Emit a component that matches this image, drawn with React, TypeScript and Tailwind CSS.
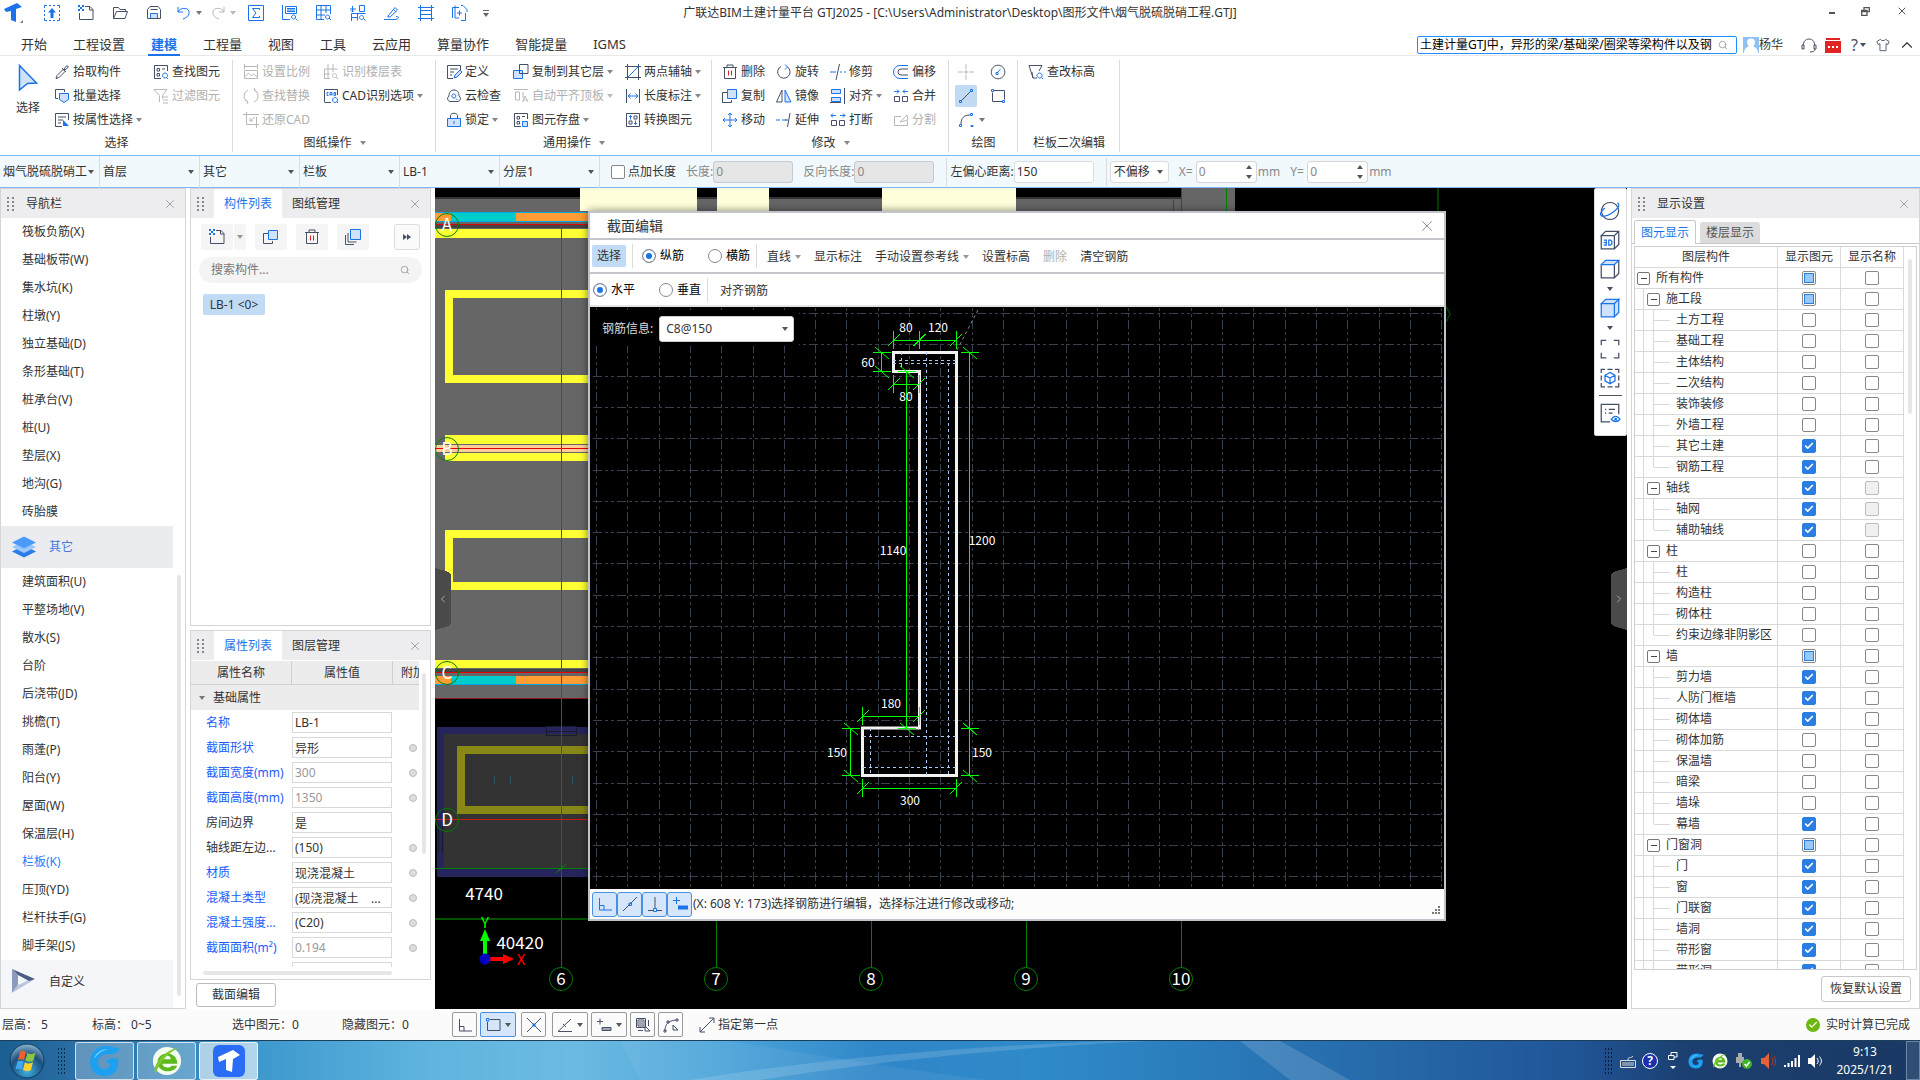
import { useId, type ReactNode } from 'react';
import { Check, ChevronLeft, ChevronRight, ChevronUp, Search, X } from 'lucide-react';
import clsx from 'clsx';

// d = dark stroke, b = blue stroke, f = blue stroke + light fill, r = red stroke, s = solid blue
type Stroke = ['d' | 'b' | 'f' | 'r' | 's', string];

const ICONS: Record<string, Stroke[]> = {
  newFile: [['d', 'M7 1.5h5l3 3V14.5H1.5V8M11.5 1.5V5H15'], ['s', 'M0 0h2v2H0zM4 0h2v2H4zM2 2h2v2H2zM0 4h2v2H0zM4 4h2v2H4z']],
  upload: [['s', 'M8 3l4 4.5H9.5V13h-3V7.5H4z'], ['b', 'M.5 3V.5H3M5 .5h2M9 .5h2M13 .5h2.5V3M15.5 5v2M15.5 9v2M15.5 13v2.5H13M11 15.5H9M7 15.5H5M3 15.5H.5V13M.5 11V9M.5 7V5']],
  open: [['d', 'M1.5 13.5V2.5h5l1.5 2h5.5v2M1.5 13.5l3-7h11l-2.5 7z']],
  save: [['f', 'M4.5 8.5h7v5h-7z'], ['d', 'M1.5 13.5v-9l2.5-3h8l2.5 3v9zM4.5 4.5h7']],
  undo: [['b', 'M2 2v5h5M2 7c2-5 12-5 11 1 0 3-3 5-6 6']],
  redo: [['b', 'M14 2v5H9M14 7C12 2 2 2 3 8c0 3 3 5 6 6']],
  sigma: [['b', 'M.5.5h15v15H.5zM11.5 5V3.5h-7L8 8l-3.5 4.5h7V11']],
  sheetFind: [['b', 'M.5 0v14.5H8M3.5 1.5h11v7h-11zM5 3.5h8M5 5h8M5 6.500h8M15.5 15.500l-2-2M11.5 10a2 2 0 1 0 .1 0z']],
  gridFind: [['b', 'M.5.5h14V9M.5.5v14H8M.5 5h14M.5 10H9M5 .5v14M10 .5V8M15 15l-2-2M11.5 10a2 2 0 1 0 .1 0z']],
  swapFind: [['b', 'M0 4h6M2.5 1v6M1 5.500l1.500 1.500L4 5.500M9.5.5h5v6h-5zM1.5 16V8.500M1.500 8.500h14M1.500 12.500H8M7.500 8.500v7M15.500 15.500l-2-2M11.5 10.500a2 2 0 1 0 .1 0z']],
  brush: [['b', 'M0 14.5h10c5 0 6-3 2-3M4 11l7-8.500 2.5 2.5-7.500 7H4zM9.500 4.500l2.500 2.500']],
  fence: [['b', 'M2.5 0v16M13.5 0v16M0 2.500h16M2.5 5.500h11M2.5 9.500h11M0 13.500h16']],
  addDoc: [['b', 'M7 2.500H.5V13M3 .5v12.500h4M9 .5h2l4 4V7M13.500 8v7.500H9M5 8h5M7.500 5.500v5']],
  pick: [['d', 'M2 14.5l1-3 6-6 2 2-6 6zM8 4l4 4M10 5l3-3.5 1.5 1.5L11 6z']],
  batch: [['d', 'M4 10.5H1.5v-9h9V4'], ['f', 'M5.5 5.5h9v6l-4.5 3-4.5-3z']],
  attr: [['d', 'M8 14.5H1.5v-13h13V8M4 5h8M4 8h5M4 11h3'], ['s', 'M9 8l6 6H9z']],
  find: [['d', 'M8 14.5H1.5v-13h13V7M4 4.5h2.5V7H4zM4 9.5h2.5V12H4zM9 5h3'], ['b', 'M15 15l-1.5-1.5M12 9a2.5 2.5 0 1 0 .1 0z']],
  filter: [['d', 'M1 1.5h13L9.5 7.5v3M6.5 14V7.5L1 1.5M10 9h5M10 12h5M10 15h5']],
  scale: [['d', 'M1.5 2.5h13M1.5 0v5M14.5 0v5M1.5 6.5h13v8h-13zM1.5 13l4-4 3 3 2-2 4 3']],
  floorTable: [['d', 'M1.5 5v9.5H7M1.5 5h13M5 0v14M1.5 10H7M10 0v8M15 15l-2-2M11.5 9.5a2 2 0 1 0 .1 0z']],
  replace: [['d', 'M5 2a6.5 6.5 0 0 0 0 12M2 12l3 2-1 2M11 14a6.5 6.5 0 0 0 0-12M14 4l-3-2 1-2']],
  cad: [['d', 'M1.5 14V1.5h13V7M8 14.5H1.5'], ['b', 'M5.5 4.5H4v3h1.5M7 7.5v-3h2v3M7 6.5h2M11 4.5v3h1.5v-3zM15 15l-1.5-1.5M12 9.5a2.5 2.5 0 1 0 .1 0z']],
  restore: [['d', 'M3.5 0v12.5M0 2.5h16M3.5 12.5H16M13.5 5v11M12 5L7 9M7 6v3h3']],
  define: [['d', 'M7 14.5H1.5v-13h13V6M4 5h8M4 8h4M4 11h2'], ['f', 'M8 14l1-3 5-5 2 2-5 5z']],
  cloud: [['d', 'M4 13.5a3 3 0 0 1-1-5.5C3 4 5 2 8 2s5 2 5 6a3 3 0 0 1-1 5.5z'], ['b', 'M7.8 6a2 2 0 1 0 .1 0zM10 10.5l1.5 1.5']],
  lock: [['f', 'M1.5 6.5h13v8h-13z'], ['d', 'M4.5 6V3.5C5 .5 11 .5 11.5 3.5V6'], ['b', 'M8 9v3']],
  copyTo: [['f', 'M.5 6.5h9v8h-9z'], ['d', 'M6.5.5h8.5v9H6.5z']],
  alignTop: [['d', 'M1 1.5h14M2.5 4v8M2.5 4h4v8h-4zM10 4v6M9.5 14l2.5-6 3 6M10 12h4']],
  store: [['d', 'M8 14.5H1.5v-13h13V7M4 4.5h2.5V7H4zM4 9.5h2.5V12H4zM9 4.5h3'], ['f', 'M9.5 9.5h5v5h-5z']],
  twoPoint: [['d', 'M2.5 0v16M13.5 0v16M0 2.5h16M0 13.5h16'], ['b', 'M2 14L14 2']],
  lengthDim: [['d', 'M1.5 1v14M14.5 1v14'], ['b', 'M3 8h10M5.5 5.5L3 8l2.5 2.5M10.5 5.5L13 8l-2.5 2.5']],
  convert: [['d', 'M1.5 1.5h13v13h-13zM9 4h3v3H9zM4 9h3v3H4z'], ['b', 'M5.5 3.5v4M4 5l1.5-1.5L7 5M10.5 12.5v-4M9 11l1.5 1.5L12 11']],
  trash: [['d', 'M1 3.5h14M5 3V1h6v2M2.5 3.5v11h11v-11'], ['r', 'M6.5 6.5v5M9.5 6.5v5']],
  rotate: [['d', 'M5 2.5a6.2 6.2 0 1 0 6.5.5'], ['b', 'M9 .5L11.5 3 9 5.5']],
  trim: [['d', 'M9.5 0L6 16'], ['b', 'M0 8h6M10 8h2M14 8h2']],
  offset: [['b', 'M15 1.5H7a6 6 0 0 0 0 13h8'], ['d', 'M15 5H8a3 3 0 0 0 0 6h7']],
  copy: [['d', 'M5 4.5H.5v10h9V12'], ['f', 'M5.5 1.5h9v9h-9z']],
  mirror: [['d', 'M6 2v12H.5z'], ['f', 'M9 2v12h6z']],
  align: [['f', 'M1.5 1.5h9v4h-9zM1.5 9.5h9v4h-9z'], ['d', 'M14.5 0v16M0 14.5h11']],
  merge: [['d', 'M1.5 8.5h5v5h-5zM9.5 8.5h5v5h-5z'], ['b', 'M1 3.5h5M4 1.5l2 2-2 2M15 3.5h-5M12 1.5l-2 2 2 2']],
  move: [['b', 'M8 1v14M1 8h14M6 3l2-2 2 2M6 13l2 2 2-2M3 6L1 8l2 2M13 6l2 2-2 2']],
  extend: [['b', 'M0 8h4M6 8h4'], ['d', 'M14 1l-2.5 14M9 8h3']],
  breakUp: [['d', 'M1.5 8.5h5v5h-5zM9.5 8.5h5v5h-5z'], ['b', 'M6 3.5H1M3 1.5l-2 2 2 2M10 3.5h5M13 1.5l2 2-2 2']],
  split: [['d', 'M8 4.5H1.5v9h13V9M7 10l7-7 1 5z']],
  point: [['d', 'M8 0v5M8 11v5M0 8h5M11 8h5M7 7h2v2H7z']],
  circle: [['d', 'M8 1.2a6.8 6.8 0 1 0 .1 0z'], ['b', 'M7 9l3.5-4M6 8.5h2v2H6z']],
  line: [['d', 'M3 13L13 3'], ['b', 'M1.5 12.5h2v2h-2zM12.5 1.5h2v2h-2z']],
  rect: [['d', 'M3.5 2.5h11v9M12.5 13.5h-10v-9'], ['b', 'M1.5 1.5h2v2h-2zM12.5 12.5h2v2h-2z']],
  arc: [['d', 'M3 12c0-6 3-9 9-9'], ['b', 'M1.5 12.5h2v2h-2zM12.5 1.5h2v2h-2zM13 13.5h2v1h-2z']],
  level: [['d', 'M1 1.5h13L11 7M1 1.5L5 14h4M4 8l1 6'], ['b', 'M15 15l-1.5-1.5M11.5 9a2.5 2.5 0 1 0 .1 0z']],
  stack: [['d', 'M.5 6v9.5H9M3 4v9h8.5'], ['f', 'M5.5.5h10v10h-10z']],
  ortho: [['d', 'M2.5 2v12H15M3 9.5h4V14']],
  orthoB: [['b', 'M2.5 2v12H15M3 9.5h4V14']],
  midB: [['d', 'M1 15L15 1'], ['b', 'M7 7h2.5v2.5H7z']],
  perpB: [['d', 'M8 1v11M1 14.5h5M10 14.5h5'], ['b', 'M6.5 12.5h3v3h-3z']],
  inputB: [['b', 'M1 4.5h7M4.5 1v7'], ['s', 'M6 9.5h10v4H6z']],
  snapRect: [['d', 'M5 2.5h10v11H2.5V5'], ['b', 'M1.5 1.5h2.5v2.5H1.5z']],
  cross: [['d', 'M1 1l14 14M15 1L1 15'], ['s', 'M6.5 6.5h3v3h-3z']],
  angle: [['d', 'M1 14.5h14M1 14.5L14 2M6 7l3 3']],
  inputD: [['d', 'M1 4.5h6M4 1.5v6M6 10.5h9v3H6zM6 12h9']],
  layers: [['d', 'M1.5 1.5h9v9h-9zM3 3h6v6H3zM4 5h4M4 7h4M13.5 3v6M3 13.5h5M10 9l5 5h-5z']],
  arcPick: [['d', 'M2 14C2 7 5 4 13 3M1 13h2v2H1zM13 2h2v2h-2zM4 4h2v2H4zM10 8l5 5h-5z']],
  arrows: [['d', 'M1 15L15 1M10 1h5v5M1 10v5h5']],
  orbit: [['d', 'M8 1.2a6.8 6.8 0 1 0 .1 0z'], ['b', 'M14 1.5c3 2-1 6-5 8.5s-8 3-8.5 1S2 7 4 5.5']],
  threeD: [['d', 'M1 5v10h10.5V4.5H1L4.5 1H15v10.5l-3.5 3.5M11.5 4.5L15 1'], ['b', 'M3 8h2v4H3M3 10h2M7 8v4h1.5l1-1V9l-1-1z']],
  topFace: [['d', 'M1 5v10h10.5V4.5M15 1v10.5l-3.5 3.5'], ['f', 'M1 4.5L4.5 1H15l-3.5 3.5z']],
  solid: [['f', 'M1 4.5h10.5V15H1zM1 4.5L4.5 1H15l-3.5 3.5zM11.5 15L15 11.5V1l-3.5 3.5z']],
  frame: [['d', 'M1 5V1h4M11 1h4v4M15 11v4h-4M5 15H1v-4']],
  cubeBox: [['d', 'M1 4V1h3M6 1h4M12 1h3v3M15 6v4M15 12v3h-3M10 15H6M4 15H1v-3M1 10V6'], ['b', 'M8 3.5l4 2.3v4.5l-4 2.3-4-2.3V5.8zM4 5.8L8 8l4-2.2M8 8v4.5']],
  listEye: [['d', 'M8 15H1V1h14v8M4 5h1M7 5h5M4 8h1M7 8h3'], ['b', 'M9 13c2-3 5-3 7 0-2 2.5-5 2.5-7 0zM12 12.5h1v1h-1z']],
};

function Icon({ name, disabled, className = 'size-4' }: { name: string; disabled?: boolean; className?: string }) {
  return (
    <svg viewBox="0 0 16 16" fill="none" strokeWidth="1" className={clsx('shrink-0 overflow-visible', className)} aria-hidden="true">
      {ICONS[name].map(([kind, d]) => {
        const color = disabled ? '#b8b8b8' : kind === 'd' ? '#454f66' : kind === 'r' ? '#e02020' : '#1a73e8';
        const fill = disabled ? 'none' : kind === 'f' ? '#d0e2fb' : kind === 's' ? '#1a73e8' : 'none';
        return <path key={d} d={d} stroke={kind === 's' ? 'none' : color} fill={fill} />;
      })}
    </svg>
  );
}

function Caret({ className = 'text-[#777]' }: { className?: string }) {
  return (
    <svg viewBox="0 0 6 4" className={clsx('h-1 w-1.5 shrink-0', className)} aria-hidden="true">
      <path d="M0 0h6L3 4z" fill="currentColor" />
    </svg>
  );
}

function Grip() {
  return (
    <svg viewBox="0 0 8 16" className="h-4 w-2 shrink-0" aria-hidden="true">
      {[0, 4, 8, 12].map((y) => (
        <path key={y} d={`M0 ${y + 1}h2v2h-2zM5 ${y + 1}h2v2h-2z`} fill="#888" />
      ))}
    </svg>
  );
}

/* ---------- title bar and menu ---------- */

const QUICK = ['newFile', 'open', 'save'];
const QUICK_TOOLS = ['sigma', 'sheetFind', 'gridFind', 'swapFind', 'brush', 'fence', 'addDoc'];
const MENUS = ['开始', '工程设置', '建模', '工程量', '视图', '工具', '云应用', '算量协作', '智能提量', 'IGMS'];

function TitleBar() {
  return (
    <header className="relative flex h-[26px] shrink-0 items-center justify-between pl-1">
      <div className="flex items-center">
        <svg viewBox="0 0 20 20" className="size-5" aria-hidden="true">
          <path d="M0 6L13 0l5 4-6 2v13l-5-2V8L2 9z" fill="#1a73e8" />
          <path d="M19 17v3h-3z" fill="#777" />
        </svg>
        <button type="button" className="ml-5" aria-label="上传"><Icon name="upload" /></button>
        <div className="ml-[18px] flex gap-[18px]">
          {QUICK.map((name) => <button type="button" key={name} aria-label={name}><Icon name={name} /></button>)}
        </div>
        <button type="button" className="ml-3.5 flex items-center gap-1" aria-label="撤销"><Icon name="undo" /><Caret /></button>
        <button type="button" className="ml-2 flex items-center gap-1" aria-label="恢复"><Icon name="redo" disabled /><Caret className="text-[#bbb]" /></button>
        <div className="ml-3 flex gap-[18px]">
          {QUICK_TOOLS.map((name) => <button type="button" key={name} aria-label={name}><Icon name={name} /></button>)}
        </div>
        <div className="ml-[15px] flex flex-col items-center gap-0.5">
          <span className="h-px w-1.5 bg-[#666]" />
          <Caret className="text-[#666]" />
        </div>
      </div>
      <h1 className="absolute left-1/2 -translate-x-1/2 text-[12px] whitespace-nowrap text-[#333]">
        广联达BIM土建计量平台 GTJ2025 - [C:\Users\Administrator\Desktop\图形文件\烟气脱硫脱硝工程.GTJ]
      </h1>
      <div className="flex items-center gap-[26px] pr-3 pb-1 text-[#555]">
        <button type="button" aria-label="最小化" className="mt-1 h-0.5 w-1.5 bg-[#555]" />
        <button type="button" aria-label="还原">
          <svg viewBox="0 0 9 9" className="size-[9px]" fill="none" stroke="currentColor" strokeWidth="1.3">
            <path d="M3 3V.7h5.3v4H6M.7 3.5H6v5H.7zM.7 4.5H6" />
          </svg>
        </button>
        <button type="button" aria-label="关闭"><X className="size-3" /></button>
      </div>
    </header>
  );
}

function MenuBar() {
  return (
    <nav className="flex h-[30px] shrink-0 justify-between border-b border-[#e8e8e8]">
      <div className="flex gap-[26px] pl-[21px]">
        {MENUS.map((menu) => (
          <button
            type="button"
            key={menu}
            className={clsx(
              'relative h-[30px] pt-1.5 text-[13px] leading-5',
              menu === '建模' ? 'font-bold text-[#1a73e8]' : 'text-[#333]'
            )}
          >
            {menu}
            {menu === '建模' && <span className="absolute -inset-x-[3px] bottom-0 h-0.5 bg-[#1a73e8]" />}
          </button>
        ))}
      </div>
      <div className="flex items-center pt-2 pr-1 text-[12px] text-[#333]">
        <div className="flex h-[18px] w-80 items-center rounded-xs border border-[#1e90ff] px-0.5">
          <input
            aria-label="搜索"
            className="min-w-0 flex-1 bg-white text-[12px] leading-4 text-black outline-none"
            defaultValue="土建计量GTJ中，异形的梁/基础梁/圈梁等梁构件以及钢"
          />
          <Search className="mr-1.5 size-2.5 text-[#999]" />
        </div>
        <svg viewBox="0 0 16 16" className="ml-1.5 size-4" aria-hidden="true">
          <path d="M0 0h16v16H0z" fill="#8fc1f5" />
          <path d="M8 1.5c5 0 4.500 5 2.500 7.500 1 2 4 1 4.500 7H1c.5-6 3.500-5 4.500-7C3.500 6.500 3 1.500 8 1.500z" fill="#fff" />
        </svg>
        <span>杨华</span>
        <svg viewBox="0 0 16 16" className="ml-[18px] size-4" fill="none" stroke="#454f66" aria-hidden="true">
          <path d="M2.5 8C2 0 14 0 13.5 8M1 8h2v4H1zM13 8h2v4h-2zM14 12c0 2-2 3-5 3" />
        </svg>
        <svg viewBox="0 0 16 16" className="ml-2 size-4" aria-hidden="true">
          <path d="M1 1h14v2H1zM0 4h16v12H0z" fill="#e02424" />
          <path d="M3 9h2v2H3zM7 9h2v2H7zM11 9h2v2h-2z" fill="#fff" />
        </svg>
        <button type="button" className="ml-2.5 flex items-center gap-0.5 text-[16px] leading-4 text-[#454f66]">?<Caret className="text-[#454f66]" /></button>
        <svg viewBox="0 0 16 16" className="ml-2.5 size-3.5" fill="none" stroke="#454f66" aria-hidden="true">
          <path d="M5 1.5c1 2 5 2 6 0l4 2.5-1.5 3.5-2-1v8h-7v-8l-2 1L1 4z" />
        </svg>
        <ChevronUp className="ml-2 size-[18px]" strokeWidth={1.5} />
      </div>
    </nav>
  );
}

/* ---------- ribbon ---------- */

type Tool = { icon: string; label: string; disabled?: boolean; caret?: boolean };

function ToolColumn({ tools, className }: { tools: Tool[]; className: string }) {
  return (
    <div className={clsx('flex shrink-0 flex-col', className)}>
      {tools.map(({ icon, label, disabled, caret }) => (
        <button
          type="button"
          key={label}
          disabled={disabled}
          className={clsx('flex h-6 items-center gap-[3px] whitespace-nowrap', disabled ? 'text-[#b0b0b0]' : 'text-[#333]')}
        >
          <Icon name={icon} disabled={disabled} />
          <span>{label}</span>
          {caret && <Caret className={disabled ? 'text-[#bbb]' : 'text-[#888]'} />}
        </button>
      ))}
    </div>
  );
}

function RibbonGroup({ label, caret, className, children }: { label: string; caret?: boolean; className: string; children: ReactNode }) {
  return (
    <section className={clsx('relative flex shrink-0 flex-col pt-1', className)}>
      <div className="flex h-[72px]">{children}</div>
      <div className="flex h-[22px] items-center justify-center gap-2 text-[#333]">
        {label}
        {caret && <Caret className="text-[#888]" />}
      </div>
      <span className="absolute top-1 right-0 h-[92px] w-px bg-[#dcdcdc]" />
    </section>
  );
}

function Ribbon() {
  return (
    <div className="flex h-[100px] shrink-0 overflow-hidden border-b border-[#7fb8f5] text-[12px]">
      <RibbonGroup label="选择" className="w-[233px]">
        <button type="button" className="flex w-[54px] flex-col items-center gap-2 pt-1 pl-0.5 text-[#333]">
          <svg viewBox="0 0 20 28" className="h-7 w-5" aria-hidden="true">
            <path d="M1.5 1.5L18.5 19 9.5 19.5 1.5 26z" fill="#d0e2fb" stroke="#1a73e8" strokeWidth="1.5" />
          </svg>
          选择
        </button>
        <ToolColumn className="w-[99px]" tools={[
          { icon: 'pick', label: '拾取构件' },
          { icon: 'batch', label: '批量选择' },
          { icon: 'attr', label: '按属性选择', caret: true },
        ]} />
        <ToolColumn className="w-[70px]" tools={[{ icon: 'find', label: '查找图元' }, { icon: 'filter', label: '过滤图元', disabled: true }]} />
      </RibbonGroup>

      <RibbonGroup label="图纸操作" caret className="w-[203px] px-2.5">
        <ToolColumn className="w-[80px]" tools={[
          { icon: 'scale', label: '设置比例', disabled: true },
          { icon: 'replace', label: '查找替换', disabled: true },
          { icon: 'restore', label: '还原CAD', disabled: true },
        ]} />
        <ToolColumn className="w-[110px]" tools={[
          { icon: 'floorTable', label: '识别楼层表', disabled: true },
          { icon: 'cad', label: 'CAD识别选项', caret: true },
        ]} />
      </RibbonGroup>

      <RibbonGroup label="通用操作" caret className="w-[276px] px-2.5">
        <ToolColumn className="w-[67px]" tools={[
          { icon: 'define', label: '定义' },
          { icon: 'cloud', label: '云检查' },
          { icon: 'lock', label: '锁定', caret: true },
        ]} />
        <ToolColumn className="w-[112px]" tools={[
          { icon: 'copyTo', label: '复制到其它层', caret: true },
          { icon: 'alignTop', label: '自动平齐顶板', disabled: true, caret: true },
          { icon: 'store', label: '图元存盘', caret: true },
        ]} />
        <ToolColumn className="w-[77px]" tools={[
          { icon: 'twoPoint', label: '两点辅轴', caret: true },
          { icon: 'lengthDim', label: '长度标注', caret: true },
          { icon: 'convert', label: '转换图元' },
        ]} />
      </RibbonGroup>

      <RibbonGroup label="修改" caret className="w-[237px] px-2.5">
        <ToolColumn className="w-[54px]" tools={[{ icon: 'trash', label: '删除' }, { icon: 'copy', label: '复制' }, { icon: 'move', label: '移动' }]} />
        <ToolColumn className="w-[54px]" tools={[{ icon: 'rotate', label: '旋转' }, { icon: 'mirror', label: '镜像' }, { icon: 'extend', label: '延伸' }]} />
        <ToolColumn className="w-[63px]" tools={[{ icon: 'trim', label: '修剪' }, { icon: 'align', label: '对齐', caret: true }, { icon: 'breakUp', label: '打断' }]} />
        <ToolColumn className="w-[46px]" tools={[{ icon: 'offset', label: '偏移' }, { icon: 'merge', label: '合并' }, { icon: 'split', label: '分割', disabled: true }]} />
      </RibbonGroup>

      <RibbonGroup label="绘图" className="w-[69px]">
        <div className="grid grid-cols-[22px_22px] content-start gap-x-2.5 pl-1.5">
          {['point', 'circle', 'line', 'rect', 'arc'].map((name) => (
            <button
              type="button"
              key={name}
              aria-label={name}
              className={clsx('my-px flex h-[22px] items-center justify-center rounded-xs', name === 'line' && 'bg-[#c2dbf5]')}
            >
              <Icon name={name} disabled={name === 'point'} />
            </button>
          ))}
          <span className="-ml-2 self-center"><Caret /></span>
        </div>
      </RibbonGroup>

      <RibbonGroup label="栏板二次编辑" className="w-[102px] px-2.5">
        <ToolColumn className="w-[80px]" tools={[{ icon: 'level', label: '查改标高' }]} />
      </RibbonGroup>
    </div>
  );
}

/* ---------- option bar ---------- */

function Dropdown({ value, label, className, selectClass }: { value: string; label: string; className?: string; selectClass?: string }) {
  return (
    <div className={clsx('relative flex items-center', className)}>
      <select aria-label={label} defaultValue={value} className={clsx('w-full appearance-none outline-none', selectClass)}>
        <option>{value}</option>
      </select>
      <span className="pointer-events-none absolute right-[5px] flex"><Caret className="text-[#555]" /></span>
    </div>
  );
}

function Spinner({ label }: { label: string }) {
  const id = useId();
  return (
    <div className="flex items-center text-[#888]">
      <label htmlFor={id} className="w-[17px]">{label}=</label>
      <div className="flex h-[22px] w-[61px] items-center rounded-[3px] border border-[#d5d5d5] bg-white px-0.5">
        <input id={id} defaultValue="0" className="w-0 flex-1 outline-none" />
        <span className="flex flex-col gap-1.5 pr-0.5">
          <Caret className="rotate-180 text-[#555]" />
          <Caret className="text-[#555]" />
        </span>
      </div>
      <span className="pl-px">mm</span>
    </div>
  );
}

const SCOPES = ['烟气脱硫脱硝工', '首层', '其它', '栏板', 'LB-1', '分层1'];

function OptionBar() {
  return (
    <div className="flex h-8 shrink-0 items-center border-b border-[#7fb8f5] bg-[#f2f9fd] text-[12px] text-[#333]">
      {SCOPES.map((scope) => (
        <Dropdown key={scope} label={scope} value={scope} className="h-8 w-[100px] shrink-0 border-r border-[#dcdcdc]" selectClass="h-8 pl-[3px]" />
      ))}
      <label className="ml-[11px] flex items-center gap-[3px]">
        <input type="checkbox" className="size-3.5 appearance-none rounded-xs border border-[#888] bg-white" />
        点加长度
      </label>
      <label className="ml-2.5 flex items-center text-[#888]">
        长度:
        <input disabled defaultValue="0" className="h-[22px] w-20 rounded-[3px] border border-[#c5c9d2] bg-[#e6e6e6] px-0.5" />
      </label>
      <label className="ml-2.5 flex items-center text-[#888]">
        反向长度:
        <input disabled defaultValue="0" className="h-[22px] w-20 rounded-[3px] border border-[#c5c9d2] bg-[#e6e6e6] px-0.5" />
      </label>
      <span className="mr-[3px] ml-3 h-7 w-px bg-[#dcdcdc]" />
      <label className="flex items-center">
        左偏心距离:
        <input defaultValue="150" className="h-[22px] w-20 rounded-[3px] border border-[#dcdcdc] bg-white px-0.5" />
      </label>
      <span className="mr-[3px] ml-3 h-7 w-px bg-[#dcdcdc]" />
      <Dropdown label="偏移方式" value="不偏移" className="h-[22px] w-[59px] rounded-[3px] border border-[#dcdcdc] bg-white" selectClass="pl-[3px]" />
      <div className="ml-2.5 flex gap-2.5">
        <Spinner label="X" />
        <Spinner label="Y" />
      </div>
    </div>
  );
}

/* ---------- left side ---------- */

function PanelHead({ tabs, title, onTab }: { tabs?: string[]; title?: string; onTab?: string }) {
  return (
    <div className="flex h-[29px] shrink-0 items-center bg-[#ededef] pr-2 pl-1.5 text-[12px] text-[#333]">
      <Grip />
      {title && <h2 className="ml-[11px]">{title}</h2>}
      {tabs && (
        <div className="ml-[9px] flex h-full">
          {tabs.map((tab) => (
            <button type="button" key={tab} className={clsx('h-full px-2.5', tab === onTab && 'bg-white text-[#1a73e8]')}>{tab}</button>
          ))}
        </div>
      )}
      <button type="button" aria-label="关闭" className="ml-auto"><X className="size-3.5 text-[#999]" strokeWidth={1.5} /></button>
    </div>
  );
}

const NAV_BASE = ['筏板负筋(X)', '基础板带(W)', '集水坑(K)', '柱墩(Y)', '独立基础(D)', '条形基础(T)', '桩承台(V)', '桩(U)', '垫层(X)', '地沟(G)', '砖胎膜'];
const NAV_OTHER = ['建筑面积(U)', '平整场地(V)', '散水(S)', '台阶', '后浇带(JD)', '挑檐(T)', '雨蓬(P)', '阳台(Y)', '屋面(W)', '保温层(H)', '栏板(K)', '压顶(YD)', '栏杆扶手(G)', '脚手架(JS)'];

function NavItem({ text }: { text: string }) {
  return (
    <li>
      <a href="#nav" className={clsx('block h-7 pl-[21px] leading-7', text === '栏板(K)' ? 'text-[#1a80ff]' : 'text-[#333]')}>{text}</a>
    </li>
  );
}

function Navigator() {
  return (
    <aside className="flex w-[186px] shrink-0 flex-col border border-[#d5d5d5] bg-white text-[12px]">
      <PanelHead title="导航栏" />
      <div className="flex min-h-0 flex-1 overflow-hidden">
        <div className="flex w-[172px] flex-col">
          <ul>{NAV_BASE.map((t) => <NavItem key={t} text={t} />)}</ul>
          <a href="#other" className="flex h-[42px] shrink-0 items-center bg-[#ebecf0] pl-2.5 text-[#4a78d8]">
            <svg viewBox="0 0 26 22" className="h-[22px] w-[26px]" aria-hidden="true">
              <path d="M1 15.5l12-6 12 6-12 6z" fill="#2b7de9" />
              <path d="M1 11l12-6 12 6-12 6z" fill="#9cc8fb" />
              <path d="M1 6.5l12-6 12 6-12 6z" fill="#4d9bf8" />
            </svg>
            <span className="ml-3">其它</span>
          </a>
          <ul>{NAV_OTHER.map((t) => <NavItem key={t} text={t} />)}</ul>
          <a href="#custom" className="flex flex-1 items-start bg-[#f5f6f9] pt-2 pl-2.5 text-[#333]">
            <svg viewBox="0 0 26 26" className="size-[26px]" aria-hidden="true">
              <path d="M1 1l6 6v10l-6 8z" fill="#8c9bbd" />
              <path d="M1 25l6-8 11-5 6-1z" fill="#b9c5dd" />
              <path d="M1 1l23 10-6 2L7 7z" fill="#4b5d86" />
            </svg>
            <span className="ml-3 leading-7">自定义</span>
          </a>
        </div>
        <div className="mt-[357px] mb-3 ml-1 w-1 rounded-full bg-[#e6e6e6]" />
      </div>
    </aside>
  );
}

function ComponentPanel() {
  return (
    <section className="flex h-[438px] shrink-0 flex-col border border-[#d5d5d5] bg-white text-[12px]">
      <PanelHead tabs={['构件列表', '图纸管理']} onTab="构件列表" />
      <div className="mt-1.5 flex h-[26px] px-2.5">
        <button type="button" aria-label="新建" className="flex w-8 items-center justify-center rounded-xs bg-[#f5f5f5]"><Icon name="newFile" /></button>
        <button type="button" aria-label="新建选项" className="ml-px flex w-3 items-center justify-center rounded-xs bg-[#f5f5f5]"><Caret className="text-[#999]" /></button>
        <div className="ml-[9px] flex gap-[9px]">
          {['copy', 'trash', 'stack'].map((name) => (
            <button type="button" key={name} aria-label={name} className="flex w-8 items-center justify-center rounded-xs bg-[#f5f5f5]"><Icon name={name} /></button>
          ))}
        </div>
        <button type="button" aria-label="更多" className="ml-auto flex w-[26px] items-center justify-center rounded-[3px] border border-[#dcdcdc] bg-[#fafafa]">
          <Caret className="-rotate-90 text-[#454f66]" />
          <Caret className="-ml-0.5 -rotate-90 text-[#454f66]" />
        </button>
      </div>
      <div className="mx-2 mt-[7px] flex h-[26px] items-center rounded-full bg-[#f4f4f4] px-3">
        <input aria-label="搜索构件" placeholder="搜索构件..." className="min-w-0 flex-1 bg-transparent outline-none placeholder:text-[#777]" />
        <Search className="size-2.5 text-[#999]" />
      </div>
      <div className="mt-[11px] ml-3">
        <button type="button" className="h-[21px] w-[62px] rounded-xs bg-[#c2dbf5] text-[#333]">LB-1 &lt;0&gt;</button>
      </div>
    </section>
  );
}

type Property = { name: string; value: string; blue?: boolean; muted?: boolean; dot?: boolean };

const PROPERTIES: Property[] = [
  { name: '名称', value: 'LB-1', blue: true },
  { name: '截面形状', value: '异形', blue: true, dot: true },
  { name: '截面宽度(mm)', value: '300', blue: true, muted: true, dot: true },
  { name: '截面高度(mm)', value: '1350', blue: true, muted: true, dot: true },
  { name: '房间边界', value: '是' },
  { name: '轴线距左边...', value: '(150)', dot: true },
  { name: '材质', value: '现浇混凝土', blue: true, dot: true },
  { name: '混凝土类型', value: '(现浇混凝土    ...', blue: true, dot: true },
  { name: '混凝土强度...', value: '(C20)', blue: true, dot: true },
  { name: '截面面积(m²)', value: '0.194', blue: true, muted: true, dot: true },
  { name: '', value: '', blue: true },
];

function PropertyPanel() {
  return (
    <section className="flex h-[350px] shrink-0 flex-col border border-[#d5d5d5] bg-white text-[12px]">
      <PanelHead tabs={['属性列表', '图层管理']} onTab="属性列表" />
      <div className="flex min-h-0 flex-1">
        <div className="flex w-[228px] flex-col">
          <div className="mt-px h-[306px] overflow-hidden">
            <table className="w-[228px] table-fixed border-separate border-spacing-0 text-[#333]">
              <thead>
                <tr className="h-6 bg-[#ececec]">
                  <th className="w-[101px] border-r border-b border-[#d0d0d0] p-0 font-normal">属性名称</th>
                  <th className="w-[101px] border-r border-b border-[#d0d0d0] p-0 font-normal">属性值</th>
                  <th className="overflow-hidden border-b border-[#d0d0d0] p-0 pl-2 text-left font-normal whitespace-nowrap">附加</th>
                </tr>
              </thead>
              <tbody>
                <tr className="h-[25px] bg-[#ececec]">
                  <td colSpan={3} className="p-0">
                    <div className="flex items-center gap-2 pl-2"><Caret />基础属性</div>
                  </td>
                </tr>
                {PROPERTIES.map(({ name, value, blue, muted, dot }) => (
                  <tr key={name} className="h-[25px]">
                    <td className={clsx('overflow-hidden p-0 pl-[15px] whitespace-nowrap', blue && 'text-[#1a5cff]')}>{name}</td>
                    <td className="p-0">
                      <input
                        aria-label={name || '属性'}
                        defaultValue={value}
                        className={clsx('block h-[21px] w-[100px] border border-[#d9d9d9] bg-white px-0.5 outline-none', muted && 'text-[#999]')}
                      />
                    </td>
                    <td className="p-0">{dot && <span className="ml-4 block size-2 rounded-full border border-[#bbb] bg-[#ddd]" />}</td>
                  </tr>
                ))}
              </tbody>
            </table>
          </div>
          <div className="mt-1 ml-3 h-1 w-[189px] rounded-full bg-[#e6e6e6]" />
        </div>
        <div className="mt-[13px] ml-[3px] h-[181px] w-1 rounded-full bg-[#e6e6e6]" />
      </div>
    </section>
  );
}

/* ---------- 3D view ---------- */

const AXES: [string, number][] = [['6', 561], ['7', 716], ['8', 871], ['9', 1026], ['10', 1181]];
const ROW_AXES: [string, number][] = [['A', 225], ['B', 449], ['C', 673], ['D', 820]];

function Scene() {
  return (
    <svg className="absolute inset-0 h-full w-full" aria-hidden="true">
      <g transform="translate(-435 -188)" fontFamily="Noto Sans CJK SC" shapeRendering="crispEdges">
        <path d="M435 198h800v501H435zM1181 188h54v20h-54z" fill="#666" />
        <path d="M435 197.5h746" stroke="#333" strokeWidth="2" />
        <path d="M1173 198v13M1181 188v23" stroke="#444" />
        <path d="M1226 188v23" stroke="#008000" />
        <path d="M1438 188v23M1446 306l4 8-4 8" stroke="#004000" fill="none" strokeWidth="2" />
        <path d="M580 188h117v23H580zM717 188h52v23h-52zM882 188h134v23H882z" fill="#ffffdc" />

        <path d="M435 213h16v8h-16zM516 213h72v8h-72zM435 676h16v8h-16zM516 676h72v8h-72z" fill="#ff9c33" />
        <path d="M451 213h65v8h-65zM451 676h65v8h-65z" fill="#00cccc" />
        <path d="M435 212.5h153M435 221.5h153M435 684.5h153" stroke="#00a8e8" />
        <path d="M435 226.5h153M435 670h153" stroke="#444" strokeWidth="3" />
        <path d="M435 229h153v9H435zM435 660h153v8H435z" fill="#ffff33" />
        <path d="M588 294H449v85h139M588 534H449v52h139" stroke="#ffff33" strokeWidth="8" fill="none" />
        <path d="M445 435h143v9H445zM445 453h143v8H445z" fill="#ffff33" />
        <path d="M435 445h153v7H435z" fill="#ffcc99" />
        <path d="M435 224.5h153M435 448.5h153M435 672.5h153" stroke="#e00000" strokeWidth="1.5" />
        <path d="M435 698.5h153" stroke="#8b1a1a" />

        <path d="M437 727h151v150H437z" fill="#25255c" />
        <path d="M444 734h144v135H444z" fill="#333" />
        <path d="M546 726h30v9h-30zM546 731h30M438 823v30M442 823v30" stroke="#1a1a30" fill="none" />
        <path d="M588 750H461v60h127" stroke="#888818" strokeWidth="8" fill="none" />
        <path d="M494 776v8M510 776v8M572 776v8" stroke="#2b5560" />
        <path d="M435 819.5h153" stroke="#d01818" />
        <path d="M561.5 225v595" stroke="#e01010" />
        <path d="M435 868.5h153M561.5 820v147M556 873l10-9" stroke="#008000" />
        <path d="M435 918.5h153" stroke="#005000" strokeWidth="2" />
        {AXES.slice(1).map(([n, x]) => <path key={n} d={`M${x + 0.5} 900v67`} stroke="#008000" />)}

        <g fill="none" stroke="#008000" shapeRendering="auto">
          {ROW_AXES.map(([n, y]) => <circle key={n} cx="447" cy={y} r="11.5" />)}
          {AXES.map(([n, x]) => <circle key={n} cx={x} cy="979" r="11.5" />)}
        </g>
        <g fill="#fff" fontSize="17" textAnchor="middle">
          {ROW_AXES.map(([n, y]) => <text key={n} x="447" y={y + 6}>{n}</text>)}
          {AXES.map(([n, x]) => <text key={n} x={x} y="985">{n}</text>)}
          <text x="484" y="900">4740</text>
          <text x="520" y="949">40420</text>
        </g>
        <g shapeRendering="auto" fontSize="15" textAnchor="middle">
          <path d="M483 957V941h-3l5-12 5 12h-3v16z" fill="#00ff00" />
          <path d="M489 957h14v-3l11 5-11 5v-3h-14z" fill="#ff0000" />
          <circle cx="485" cy="959" r="5.5" fill="#0000c0" />
          <text x="485" y="928" fill="#00ff00">Y</text>
          <text x="521" y="965" fill="#ff0000">X</text>
        </g>
        <path d="M435 568l14 4 2 3v48l-2 3-14 4z" fill="#4a4a4a" />
        <path d="M1627 568l-14 4-2 3v48l2 3 14 4z" fill="#4a4a4a" />
      </g>
    </svg>
  );
}

const GRID_X = Array.from({ length: 28 }, (_, i) => Math.round(596 + i * 31.3));
const GRID_Y = Array.from({ length: 19 }, (_, i) => Math.round(313 + i * 31.3));

// horizontal dims: [y, x1, x2], vertical dims: [x, y1, y2]
const H_DIMS = [[340, 893, 919], [340, 919, 956], [384, 893, 919], [716, 862, 919], [788, 862, 956]];
const V_DIMS = [[881, 352, 371], [906, 371, 728], [969, 352, 728], [969, 728, 775], [850, 728, 775]];
const DIM_TEXT: [string, number, number][] = [
  ['80', 906, 332], ['120', 938, 332], ['60', 868, 367], ['80', 906, 401], ['1140', 893, 555],
  ['1200', 982, 545], ['180', 891, 708], ['150', 982, 757], ['150', 837, 757], ['300', 910, 805],
];

function SectionDrawing() {
  return (
    <svg className="absolute inset-0 h-full w-full" aria-hidden="true">
      <g transform="translate(-590 -307)" fill="none">
        <g stroke="#38404e" strokeDasharray="9 3 3 3 3 3">
          {GRID_X.map((x) => <path key={x} d={`M${x + 0.5} 308V887`} strokeDashoffset="12" />)}
          {GRID_Y.map((y) => <path key={y} d={`M593 ${y + 0.5}H1442`} />)}
        </g>
        <path d="M590 310h209v36H590z" fill="#000" />
        <path d="M957 350l22-42" stroke="#888" strokeDasharray="3 3" />
        <path d="M893.5 352.5h63v423h-94v-47.500h57V371.5h-26z" stroke="#f2f2f2" strokeWidth="3" />
        <path
          d="M893 360.5h63M893 363.5h63M901.5 352v19M926.5 352v423M948.5 363v412M863 736.5h93M863 767.5h93M870.5 728v47"
          stroke="#a8c8f0"
          strokeDasharray="3 3"
        />
        <g stroke="#00ff00">
          {H_DIMS.map(([y, a, b]) => (
            <path key={`${y}-${a}`} d={`M${a} ${y + 0.5}H${b}M${a + 0.5} ${y - 9}v18M${b + 0.5} ${y - 9}v18M${a - 5} ${y + 6}l12-12M${b - 6} ${y + 6}l12-12`} />
          ))}
          {V_DIMS.map(([x, a, b]) => (
            <path key={`${x}-${a}`} d={`M${x + 0.5} ${a}V${b}M${x - 8} ${a + 0.5}h18M${x - 8} ${b + 0.5}h18M${x - 6} ${a - 5}l14 12M${x - 6} ${b - 5}l14 12`} />
          ))}
        </g>
        <g fill="#fff" fontSize="12" fontFamily="Noto Sans CJK SC" textAnchor="middle">
          {DIM_TEXT.map(([t, x, y]) => <text key={`${t}-${x}-${y}`} x={x} y={y}>{t}</text>)}
        </g>
      </g>
    </svg>
  );
}

function Radio({ name, label, on }: { name: string; label: string; on?: boolean }) {
  return (
    <label className="flex items-center gap-1 text-black">
      <input
        type="radio"
        name={name}
        defaultChecked={on}
        className="size-3.5 appearance-none rounded-full border border-[#888] bg-white checked:bg-[#1a73e8] checked:shadow-[inset_0_0_0_3px_#fff]"
      />
      {label}
    </label>
  );
}

function SectionEditor() {
  return (
    <div
      role="dialog"
      aria-label="截面编辑"
      className="absolute top-[23px] left-[153px] flex h-[710px] w-[858px] flex-col border-2 border-[#c0c3c8] bg-white text-[12px] text-[#333] shadow-[0_0_8px_rgba(0,0,0,0.5)]"
    >
      <div className="flex h-[25px] shrink-0 items-center justify-between pr-2 pl-[17px]">
        <h2 className="text-[14px]">截面编辑</h2>
        <button type="button" aria-label="关闭"><X className="size-[18px] text-[#888]" strokeWidth={1.2} /></button>
      </div>
      <div className="flex h-[34px] shrink-0 items-center border-t-2 border-[#c3c7cc] pl-0.5">
        <button type="button" className="h-[22px] rounded-xs bg-[#c2dbf5] px-[5px]">选择</button>
        <span className="mr-[9px] ml-1.5 h-6 w-px bg-[#dcdcdc]" />
        <div className="flex gap-6">
          <Radio name="bar" label="纵筋" on />
          <Radio name="bar" label="横筋" />
        </div>
        <span className="mr-2.5 ml-1.5 h-6 w-px bg-[#dcdcdc]" />
        <div className="flex items-center gap-[13px] pt-0.5">
          <button type="button" className="flex items-center gap-1">直线<Caret className="text-[#999]" /></button>
          <button type="button">显示标注</button>
          <button type="button" className="flex items-center gap-1">手动设置参考线<Caret className="text-[#999]" /></button>
          <button type="button">设置标高</button>
          <button type="button" disabled className="text-[#b0b0b0]">删除</button>
          <button type="button">清空钢筋</button>
        </div>
      </div>
      <div className="flex h-[35px] shrink-0 items-center border-y-2 border-t-[#c3c7cc] border-b-[#e4e4e4] pl-[3px]">
        <div className="flex gap-6">
          <Radio name="dir" label="水平" on />
          <Radio name="dir" label="垂直" />
        </div>
        <span className="mr-3 ml-1.5 h-6 w-px bg-[#dcdcdc]" />
        <button type="button" className="pt-0.5">对齐钢筋</button>
      </div>
      <div className="relative min-h-0 flex-1 overflow-hidden bg-black">
        <SectionDrawing />
        <div className="relative flex items-center gap-1.5 pt-[9px] pl-3 text-[#ddd]">
          <span>钢筋信息:</span>
          <Dropdown label="钢筋信息" value="C8@150" className="h-[26px] w-[135px] rounded-[3px] border border-[#ccc] bg-white text-[#333]" selectClass="pl-1.5" />
        </div>
      </div>
      <div className="flex h-[30px] shrink-0 items-center bg-[#fcfcfc] pr-1 pl-0.5">
        {['orthoB', 'midB', 'perpB', 'inputB'].map((name) => (
          <button type="button" key={name} aria-label={name} className="flex size-[25px] items-center justify-center rounded-[3px] border border-[#4a90e2] bg-[#d6e6fa]">
            <Icon name={name} />
          </button>
        ))}
        <span className="ml-px">(X: 608 Y: 173)选择钢筋进行编辑，选择标注进行修改或移动;</span>
        <svg viewBox="0 0 8 8" className="mt-3 ml-auto size-2" aria-hidden="true">
          <path d="M6 0h2v2H6zM3 3h2v2H3zM6 3h2v2H6zM0 6h2v2H0zM3 6h2v2H3zM6 6h2v2H6z" fill="#777" />
        </svg>
      </div>
    </div>
  );
}

function Viewport() {
  return (
    <main className="relative min-w-0 flex-1 overflow-hidden bg-black">
      <Scene />
      <ChevronLeft className="absolute top-[405px] left-0.5 size-3 text-[#aaa]" />
      <ChevronRight className="absolute top-[405px] right-0.5 size-3 text-[#aaa]" />
      <SectionEditor />
      <div className="absolute top-0 right-0 flex w-[33px] flex-col items-center rounded-xs border border-[#dcdcdc] bg-white py-3 pr-px">
        <Icon name="orbit" className="size-5" />
        <Icon name="threeD" className="mt-[9px] size-5" />
        <Icon name="topFace" className="mt-[9px] size-5" />
        <span className="mt-2 flex"><Caret className="text-[#454f66]" /></span>
        <Icon name="solid" className="mt-[7px] size-5" />
        <span className="mt-2 flex"><Caret className="text-[#454f66]" /></span>
        <Icon name="frame" className="mt-[9px] size-5" />
        <Icon name="cubeBox" className="mt-[9px] size-5" />
        <span className="mt-[7px] h-px w-[23px] bg-[#555]" />
        <Icon name="listEye" className="mt-[7px] size-5" />
      </div>
    </main>
  );
}

/* ---------- display settings ---------- */

// state: 0 off, 1 on, 2 partly on
type Layer = { name: string; level: 0 | 1 | 2; state: 0 | 1 | 2; locked?: boolean; last?: boolean };

const LAYERS: Layer[] = [
  { name: '所有构件', level: 0, state: 2 },
  { name: '施工段', level: 1, state: 2 },
  { name: '土方工程', level: 2, state: 0 },
  { name: '基础工程', level: 2, state: 0 },
  { name: '主体结构', level: 2, state: 0 },
  { name: '二次结构', level: 2, state: 0 },
  { name: '装饰装修', level: 2, state: 0 },
  { name: '外墙工程', level: 2, state: 0 },
  { name: '其它土建', level: 2, state: 1 },
  { name: '钢筋工程', level: 2, state: 1, last: true },
  { name: '轴线', level: 1, state: 1, locked: true },
  { name: '轴网', level: 2, state: 1, locked: true },
  { name: '辅助轴线', level: 2, state: 1, locked: true, last: true },
  { name: '柱', level: 1, state: 0 },
  { name: '柱', level: 2, state: 0 },
  { name: '构造柱', level: 2, state: 0 },
  { name: '砌体柱', level: 2, state: 0 },
  { name: '约束边缘非阴影区', level: 2, state: 0, last: true },
  { name: '墙', level: 1, state: 2 },
  { name: '剪力墙', level: 2, state: 1 },
  { name: '人防门框墙', level: 2, state: 1 },
  { name: '砌体墙', level: 2, state: 1 },
  { name: '砌体加筋', level: 2, state: 0 },
  { name: '保温墙', level: 2, state: 0 },
  { name: '暗梁', level: 2, state: 0 },
  { name: '墙垛', level: 2, state: 0 },
  { name: '幕墙', level: 2, state: 1, last: true },
  { name: '门窗洞', level: 1, state: 2 },
  { name: '门', level: 2, state: 1 },
  { name: '窗', level: 2, state: 1 },
  { name: '门联窗', level: 2, state: 1 },
  { name: '墙洞', level: 2, state: 1 },
  { name: '带形窗', level: 2, state: 1 },
  { name: '带形洞', level: 2, state: 1 },
];

function Tick({ label, state, locked }: { label: string; state: 0 | 1 | 2; locked?: boolean }) {
  return (
    <span className="relative mx-auto block size-3.5">
      <input
        type="checkbox"
        aria-label={label}
        defaultChecked={state === 1}
        disabled={locked && state === 0}
        className="block size-3.5 appearance-none rounded-xs border border-[#888] bg-white checked:border-[#2a7de1] checked:bg-[#2a7de1] disabled:border-[#bbb] disabled:bg-[#f0f0f0]"
      />
      {state === 1 && <Check className="pointer-events-none absolute inset-0.5 size-2.5 text-white" strokeWidth={4} />}
      {state === 2 && <span className="pointer-events-none absolute inset-0.5 border border-[#2a7de1] bg-[#99c8fa]" />}
    </span>
  );
}

function Expander() {
  return (
    <button type="button" aria-label="折叠" className="flex size-[13px] shrink-0 items-center justify-center rounded-xs border border-[#777] bg-white">
      <span className="h-px w-1.5 bg-[#444]" />
    </button>
  );
}

function LayerName({ name, level, last }: Layer) {
  return (
    <div className="flex h-5 items-center overflow-hidden whitespace-nowrap">
      {level === 0 && <span className="ml-0.5 flex items-center gap-1.5"><Expander />{name}</span>}
      {level === 1 && (
        <>
          <span className="ml-2 h-5 w-1 shrink-0 border-l border-[#d9d9d9]" />
          <span className="flex items-center gap-1.5"><Expander />{name}</span>
        </>
      )}
      {level === 2 && (
        <>
          <span className="ml-2 h-5 w-2.5 shrink-0 border-l border-[#d9d9d9]" />
          <span className={clsx('w-px shrink-0 bg-[#d9d9d9]', last ? 'h-2.5 self-start' : 'h-5')} />
          <span className="mr-1.5 h-px w-4 shrink-0 bg-[#d9d9d9]" />
          {name}
        </>
      )}
    </div>
  );
}

function DisplayPanel() {
  return (
    <aside className="flex w-[289px] shrink-0 flex-col border border-[#d5d5d5] bg-white text-[12px] text-[#333]">
      <PanelHead title="显示设置" />
      <div className="flex h-[26px] shrink-0 items-end gap-1 border-b border-[#c8c8c8] pl-0.5">
        <button type="button" className="-mb-px h-6 rounded-t-[3px] border border-b-0 border-[#c8c8c8] bg-white px-1.5 text-[#1a73e8]">图元显示</button>
        <button type="button" className="h-[21px] rounded-t-[3px] bg-[#dcdcdc] px-1.5 text-[#555]">楼层显示</button>
      </div>
      <div className="mx-0.5 mt-0.5 flex h-[724px] border border-[#d0d0d0]">
        <div className="w-[269px] overflow-hidden">
          <table className="w-[269px] table-fixed border-separate border-spacing-0">
            <thead>
              <tr>
                <th className="h-[21px] border-r border-b border-[#d9d9d9] p-0 font-normal">图层构件</th>
                <th className="w-[63px] border-r border-b border-[#d9d9d9] p-0 font-normal">显示图元</th>
                <th className="w-[63px] border-r border-b border-[#d9d9d9] p-0 font-normal">显示名称</th>
              </tr>
            </thead>
            <tbody>
              {LAYERS.map((layer, i) => (
                <tr key={i}>
                  <td className="border-r border-b border-[#d9d9d9] p-0"><LayerName {...layer} /></td>
                  <td className="border-r border-b border-[#d9d9d9] p-0"><Tick label={`${layer.name}图元`} state={layer.state} /></td>
                  <td className="border-r border-b border-[#d9d9d9] p-0"><Tick label={`${layer.name}名称`} state={0} locked={layer.locked} /></td>
                </tr>
              ))}
            </tbody>
          </table>
        </div>
        <div className="mt-3 ml-1 h-[155px] w-1 rounded-full bg-[#e6e6e6]" />
      </div>
      <div className="flex justify-end pt-1.5 pr-2">
        <button type="button" className="h-[26px] rounded-[3px] border border-[#c8c8c8] bg-white px-2">恢复默认设置</button>
      </div>
    </aside>
  );
}

/* ---------- status bar and taskbar ---------- */

const SNAPS = [
  { icon: 'ortho', className: 'w-[25px] border-[#999]' },
  { icon: 'snapRect', className: 'ml-[3px] w-9 border-[#4a90e2] bg-[#d6e6fa]', caret: true },
  { icon: 'cross', className: 'ml-[5px] w-[25px] border-[#999]' },
  { icon: 'angle', className: 'ml-1.5 w-9 border-[#999]', caret: true },
  { icon: 'inputD', className: 'ml-[3px] w-9 border-[#999]', caret: true },
  { icon: 'layers', className: 'ml-[3px] w-[25px] border-[#999]' },
  { icon: 'arcPick', className: 'ml-[3px] w-[25px] border-[#999]' },
];

function StatusBar() {
  return (
    <footer className="flex h-[31px] shrink-0 items-center bg-[#fbfbfb] pr-2.5 pl-0.5 text-[12px] text-[#333]">
      <span className="w-[90px]">层高： 5</span>
      <span className="w-[140px]">标高： 0~5</span>
      <span className="w-[110px]">选中图元：0</span>
      <span className="w-[110px]">隐藏图元：0</span>
      {SNAPS.map(({ icon, className, caret }) => (
        <button
          type="button"
          key={icon}
          aria-label={icon}
          className={clsx('flex h-[25px] items-center justify-center gap-1 rounded-xs border', className)}
        >
          <Icon name={icon} />
          {caret && <Caret className="text-[#555]" />}
        </button>
      ))}
      <Icon name="arrows" className="ml-4 size-4" />
      <span className="ml-[3px]">指定第一点</span>
      <span className="ml-auto flex items-center gap-1.5">
        <span className="flex size-3.5 items-center justify-center rounded-full bg-[#6cb80e]"><Check className="size-2.5 text-white" strokeWidth={3} /></span>
        实时计算已完成
      </span>
    </footer>
  );
}

function SwirlLogo({ className }: { className: string }) {
  return (
    <svg viewBox="0 0 32 32" className={className} aria-hidden="true">
      <path d="M31 3c-2 5-6 6-11 6-8 0-12 5-11 10 1 6 9 7 12 2 1-3-2-4-4-3 1-4 6-6 12-4 2 10-4 17-13 17C6 31 1 25 1 17 1 8 8 1 17 1c6 0 9 3 14 2z" fill="#1ea0f2" />
      <path d="M5 14C7 7 13 4 20 4c-7 1-12 5-15 10z" fill="#7fd4ff" />
    </svg>
  );
}

function BrowserLogo({ className }: { className: string }) {
  return (
    <svg viewBox="0 0 32 32" className={className} aria-hidden="true">
      <circle cx="16" cy="16" r="15" fill="#f4fbef" />
      <path d="M11 14h9c0-5-8-5-9 0zM27 19H11c1 5 8 5 10 2h6c-4 9-21 8-21-4S27 4 27 19z" fill="#5cb81c" fillRule="evenodd" />
      <path d="M4 30C-2 22 15 2 29 2 19 5 7 18 4 30z" fill="#7cc832" />
    </svg>
  );
}

function Taskbar() {
  const task = 'flex h-[38px] w-[59px] items-center justify-center rounded-[3px] border border-white/70';
  return (
    <div className="relative flex h-10 shrink-0 items-center overflow-hidden border-t border-[#1c3f5c] bg-[linear-gradient(90deg,#1b5e91_0%,#2a6fa5_4%,#3f9ace_14%,#5fb4df_22%,#6cbae3_30%,#4aa3d8_38%,#2f86c8_46%,#2f8ac9_54%,#2b7dbd_62%,#2669a9_72%,#205596_82%,#1b3f70_88%,#1a3963_100%)]">
      <svg viewBox="0 0 1920 40" preserveAspectRatio="none" className="absolute inset-0 h-full w-full" aria-hidden="true">
        <path d="M620 0h110c60 10 180 30 260 40H640z" fill="#fff" opacity=".06" />
        <path d="M1240 0h40l70 40h-60zM690 40c120-20 260-34 420-40h40c-160 8-280 22-390 40z" fill="#fff" opacity=".14" />
      </svg>
      <div className="relative flex h-full w-full items-center">
        <button type="button" aria-label="开始" className="ml-[9px] size-9">
          <svg viewBox="0 0 36 36" className="size-9">
            <defs>
              <radialGradient id="orb" cx="50%" cy="80%" r="80%">
                <stop offset="0" stopColor="#3fb0e0" />
                <stop offset=".6" stopColor="#1b4f80" />
                <stop offset="1" stopColor="#8fb8d0" />
              </radialGradient>
            </defs>
            <circle cx="18" cy="18" r="17" fill="url(#orb)" stroke="#123a5c" />
            <path d="M11 9c2-2 4-1 6 0l-2 8c-2-1-4-1-6 0z" fill="#f0602a" />
            <path d="M18.5 9.5c2 2 5 2 8 0l-2 8c-3 2-5 1-8 0z" fill="#8cc63f" />
            <path d="M8.5 18.5c2-1 4-1 6 0l-2 8c-2-1-4-1-6 0z" fill="#3fa9f5" />
            <path d="M16 19c2 2 5 2 8 0l-2 8c-3 2-5 1-8 0z" fill="#fcd12a" />
          </svg>
        </button>
        <span className="ml-3 h-7 w-2 bg-[radial-gradient(circle,#0b2c47_1px,transparent_1px)] bg-[size:3px_4px]" />
        <div className="ml-2.5 flex gap-[3px]">
          <button type="button" aria-label="浏览器一" className={clsx(task, 'bg-white/25')}><SwirlLogo className="size-8" /></button>
          <button type="button" aria-label="浏览器二" className={clsx(task, 'bg-white/25')}><BrowserLogo className="size-[30px]" /></button>
          <button type="button" aria-label="土建计量" className={clsx(task, 'bg-white/60')}>
            <svg viewBox="0 0 32 32" className="size-8">
              <rect width="32" height="32" rx="6" fill="#2b6cf6" />
              <path d="M5 12L20 5l7 5-7 4-1 13-6-2V14l-7 3z" fill="#fff" />
            </svg>
          </button>
        </div>
        <div className="ml-auto flex h-full items-center text-white">
          <span className="h-7 w-2 bg-[radial-gradient(circle,#0b1c37_1px,transparent_1px)] bg-[size:3px_4px]" />
          <svg viewBox="0 0 16 16" className="ml-2 size-4" fill="none" stroke="#ddd">
            <path d="M.5 7.5h15v7H.5zM2 10h12M2 12h12M8 7c0-4 3-1 5-4" />
          </svg>
          <span className="ml-1.5 flex size-4 items-center justify-center rounded-full border border-white bg-[#1d2fb0] text-[12px] leading-none font-bold">?</span>
          <svg viewBox="0 0 10 18" className="ml-2.5 h-[18px] w-2.5" fill="none" stroke="#fff">
            <path d="M3 3V.5h6V5H6M.5 3.5H6v4H.5z" />
            <path d="M2 14h6l-3 3z" fill="#fff" stroke="none" />
          </svg>
          <SwirlLogo className="ml-2.5 size-4" />
          <BrowserLogo className="ml-2 size-4" />
          <svg viewBox="0 0 16 16" className="ml-2 size-4">
            <path d="M2 0h4v4h2v6H5v4H3v-4H0V4h2z" fill="#aaa" />
            <circle cx="11" cy="11" r="5" fill="#3db52a" />
            <path d="M8.5 11l2 2 3-4" stroke="#fff" strokeWidth="1.5" fill="none" />
          </svg>
          <svg viewBox="0 0 16 16" className="ml-2 size-4">
            <path d="M1 5h3l5-5v16l-5-5H1z" fill="#e8603a" />
            <path d="M11.5 4c2 2 2 6 0 8M14 3c2 3 2 7 0 10" stroke="#b03a20" fill="none" />
          </svg>
          <svg viewBox="0 0 16 14" className="ml-2 h-3.5 w-4">
            <path d="M0 11h2v2H0zM3.5 9h2v4h-2zM7 7h2v6H7zM10.5 4h2v9h-2zM14 1h2v12h-2z" fill="#fff" />
          </svg>
          <svg viewBox="0 0 16 16" className="ml-2 size-4">
            <path d="M0 5h3l4-4v14l-4-4H0z" fill="#fff" />
            <path d="M9 5c1.5 2 1.5 4 0 6M11.5 3.5c2.5 3 2.5 6 0 9" stroke="#fff" fill="none" />
          </svg>
          <div className="flex w-[82px] flex-col items-center text-[12px] leading-[18px]">
            <span>9:13</span>
            <span>2025/1/21</span>
          </div>
          <button type="button" aria-label="显示桌面" className="h-full w-3.5 border border-[#6a87a8] bg-white/10" />
        </div>
      </div>
    </div>
  );
}

export default function App() {
  return (
    <div className="flex h-screen w-full flex-col overflow-hidden bg-white font-['Noto_Sans','Noto_Sans_CJK_SC',sans-serif] leading-4">
      <TitleBar />
      <MenuBar />
      <Ribbon />
      <OptionBar />
      <div className="flex min-h-0 flex-1 gap-1">
        <Navigator />
        <div className="flex w-[241px] shrink-0 flex-col gap-1">
          <ComponentPanel />
          <PropertyPanel />
          <button type="button" className="-mt-px ml-1.5 h-6 w-20 rounded-[3px] border border-[#bbb] bg-white text-[12px] text-[#333]">截面编辑</button>
        </div>
        <Viewport />
        <DisplayPanel />
      </div>
      <StatusBar />
      <Taskbar />
    </div>
  );
}
